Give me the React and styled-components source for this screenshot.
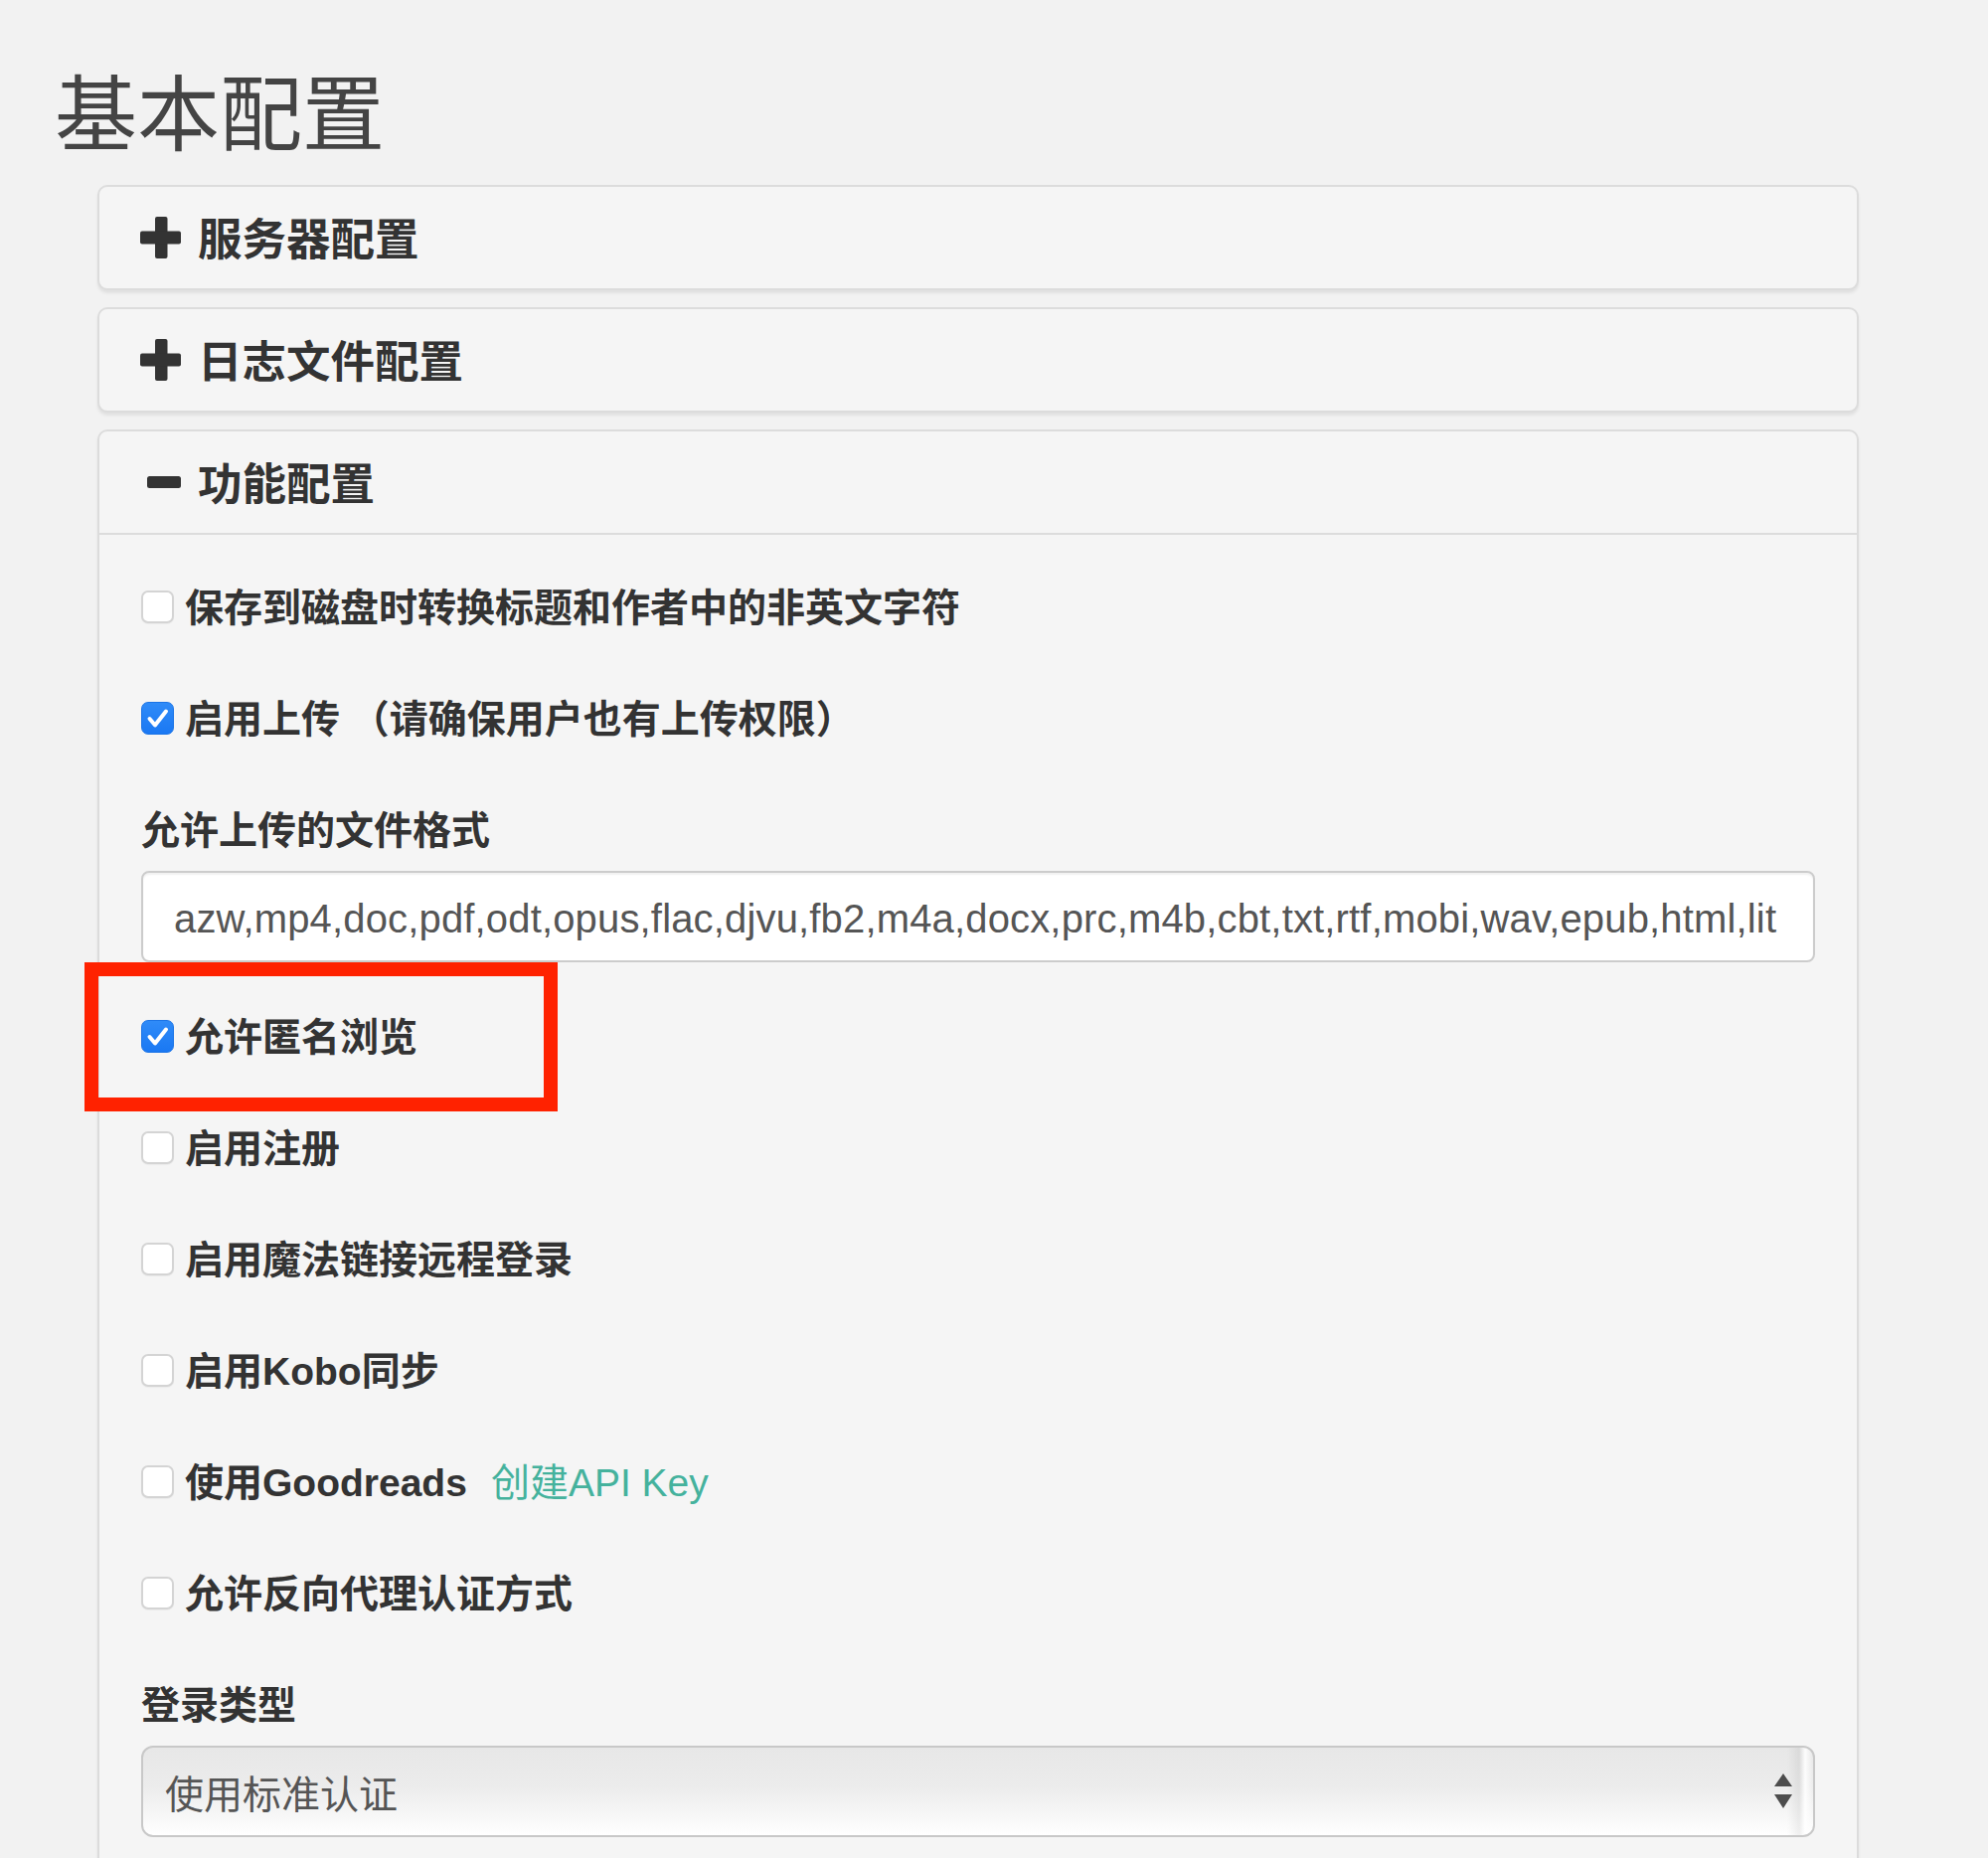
import React from "react";
import styled, { createGlobalStyle, css } from "styled-components";

const GlobalStyle = createGlobalStyle`
  html, body {
    margin: 0;
    padding: 0;
    background: #f2f2f2;
  }
  body {
    font-family: "Liberation Sans", "Noto Sans CJK SC", sans-serif;
    color: #333;
  }
  *, *::before, *::after {
    box-sizing: border-box;
  }
`;

const Page = styled.div`
  position: relative;
  width: 2000px;
  height: 1869px;
  overflow: hidden;
  padding: 71px 0 0 55px;
  background: #f2f2f2;
`;

const Title = styled.h2`
  margin: 0;
  font-size: 83px;
  line-height: 91px;
  font-weight: 400;
  color: #444;
`;

const PanelGroup = styled.div`
  margin: 24px 0 0 43px;
  width: 1772px;
  display: flex;
  flex-direction: column;
  gap: 17px;
`;

const Panel = styled.section`
  background: #f5f5f5;
  border: 2px solid #dcdcdc;
  border-radius: 10px;
  box-shadow: 0 3px 3px rgba(0, 0, 0, 0.07);
  ${(p) =>
    p.$open &&
    css`
      border-bottom-left-radius: 0;
      border-bottom-right-radius: 0;
    `}
`;

const PanelHeading = styled.div`
  height: ${(p) => (p.$open ? "104px" : "102px")};
  display: flex;
  align-items: center;
  padding-left: 41px;
  border-bottom: ${(p) => (p.$open ? "2px solid #dcdcdc" : "none")};
`;

const IconSvg = styled.svg`
  width: 44px;
  height: 44px;
  margin-right: 14px;
  flex-shrink: 0;
  fill: #333;
`;

const PanelTitle = styled.h4`
  margin: 0;
  font-size: 44.5px;
  line-height: 50px;
  font-weight: 700;
  color: #333;
  padding-top: 6px;
`;

const PanelBody = styled.div`
  padding: 44px 42px 60px 42px;
`;

const CheckRow = styled.label`
  display: flex;
  align-items: center;
  height: 56px;
  margin-bottom: 56px;
`;

const Box = styled.span`
  width: 33px;
  height: 33px;
  margin-right: 11px;
  flex-shrink: 0;
  border-radius: 7px;
  display: flex;
  align-items: center;
  justify-content: center;
  ${(p) =>
    p.$checked
      ? css`
          background: linear-gradient(#2f8bf8, #1a78f3);
          border: 1px solid #1b74e6;
        `
      : css`
          background: #fff;
          border: 2px solid #d4d4d4;
          box-shadow: 0 1px 1px rgba(0, 0, 0, 0.04);
        `}
`;

const CheckText = styled.span`
  font-size: 39px;
  line-height: 56px;
  font-weight: 700;
  color: #333;
  white-space: nowrap;
  padding-top: 3px;
`;

const KeyLink = styled.a`
  margin-left: 24px;
  font-size: 39px;
  line-height: 56px;
  font-weight: 400;
  color: #45b29d;
  text-decoration: none;
  white-space: nowrap;
  padding-top: 3px;
`;

const FieldGroup = styled.div`
  margin-bottom: 46px;
`;

const FieldLabel = styled.div`
  height: 56px;
  line-height: 56px;
  margin-bottom: 14px;
  font-size: 39px;
  font-weight: 700;
  color: #333;
  padding-top: 2px;
`;

const TextInput = styled.input`
  display: block;
  width: 100%;
  height: 92px;
  border: 2px solid #cccccc;
  border-radius: 8px;
  background: #fff;
  padding: 4px 31px 0;
  font-family: "Liberation Sans", "Noto Sans CJK SC", sans-serif;
  font-size: 40px;
  letter-spacing: 0.16px;
  color: #555;
  box-shadow: inset 0 2px 2px rgba(0, 0, 0, 0.06);
  outline: none;
`;

const SelectBox = styled.div`
  display: flex;
  align-items: center;
  justify-content: space-between;
  height: 92px;
  border: 2px solid #c8c8c8;
  border-radius: 12px;
  padding: 0 20px 0 22px;
  background:
    linear-gradient(
      to right,
      rgba(0, 0, 0, 0) calc(100% - 26px),
      rgba(0, 0, 0, 0.06) calc(100% - 14px),
      rgba(255, 255, 255, 0.9) calc(100% - 8px),
      rgba(255, 255, 255, 0) 100%
    ),
    linear-gradient(#e7e7e7 0%, #ececec 45%, #f6f6f6 75%, #ffffff 100%);
`;

const SelectText = styled.span`
  font-size: 39px;
  font-weight: 400;
  color: #555;
  white-space: nowrap;
`;

const ArrowSvg = styled.svg`
  width: 20px;
  height: 38px;
  fill: #4d4d4d;
  flex-shrink: 0;
`;

const Annotation = styled.div`
  position: absolute;
  left: 85px;
  top: 968px;
  width: 476px;
  height: 150px;
  border: 14px solid #ff2200;
  pointer-events: none;
`;

const PlusIcon = () => (
  <IconSvg viewBox="0 0 44 44">
    <rect x="15" y="1" width="12.5" height="42" rx="2" />
    <rect x="0" y="15.5" width="41" height="13" rx="2" />
  </IconSvg>
);

const MinusIcon = () => (
  <IconSvg viewBox="0 0 44 44">
    <rect x="7" y="16" width="34" height="12" rx="2.5" />
  </IconSvg>
);

const Check = ({ checked }) => (
  <Box $checked={checked}>
    {checked && (
      <svg width="31" height="31" viewBox="0 0 31 31">
        <path
          d="M7.5 16 L13 22.5 L24 8.5"
          fill="none"
          stroke="#fff"
          strokeWidth="4"
          strokeLinecap="round"
          strokeLinejoin="round"
        />
      </svg>
    )}
  </Box>
);

const Option = ({ checked, children, link }) => (
  <CheckRow>
    <Check checked={checked} />
    <CheckText>{children}</CheckText>
    {link && <KeyLink href="#">{link}</KeyLink>}
  </CheckRow>
);

const formats =
  "azw,mp4,doc,pdf,odt,opus,flac,djvu,fb2,m4a,docx,prc,m4b,cbt,txt,rtf,mobi,wav,epub,html,lit";

export default function App() {
  return (
    <>
      <GlobalStyle />
      <Page>
        <Title>基本配置</Title>
        <PanelGroup>
          <Panel>
            <PanelHeading>
              <PlusIcon />
              <PanelTitle>服务器配置</PanelTitle>
            </PanelHeading>
          </Panel>
          <Panel>
            <PanelHeading>
              <PlusIcon />
              <PanelTitle>日志文件配置</PanelTitle>
            </PanelHeading>
          </Panel>
          <Panel $open>
            <PanelHeading $open>
              <MinusIcon />
              <PanelTitle>功能配置</PanelTitle>
            </PanelHeading>
            <PanelBody>
              <Option>保存到磁盘时转换标题和作者中的非英文字符</Option>
              <Option checked>启用上传 （请确保用户也有上传权限）</Option>
              <FieldGroup>
                <FieldLabel>允许上传的文件格式</FieldLabel>
                <TextInput readOnly value={formats} />
              </FieldGroup>
              <Option checked>允许匿名浏览</Option>
              <Option>启用注册</Option>
              <Option>启用魔法链接远程登录</Option>
              <Option>启用Kobo同步</Option>
              <Option link="创建API Key">使用Goodreads</Option>
              <Option>允许反向代理认证方式</Option>
              <FieldGroup>
                <FieldLabel>登录类型</FieldLabel>
                <SelectBox>
                  <SelectText>使用标准认证</SelectText>
                  <ArrowSvg viewBox="0 0 20 38">
                    <path d="M10 1 L19 14 L1 14 Z" />
                    <path d="M1 22 L19 22 L10 36 Z" />
                  </ArrowSvg>
                </SelectBox>
              </FieldGroup>
            </PanelBody>
          </Panel>
        </PanelGroup>
        <Annotation />
      </Page>
    </>
  );
}
